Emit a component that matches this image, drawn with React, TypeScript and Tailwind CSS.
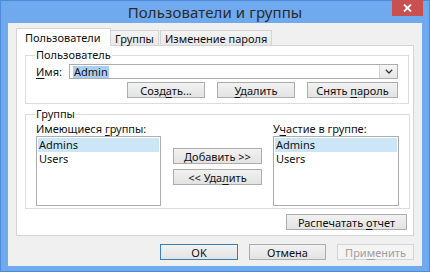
import React from "react";

const font = { fontFamily: '"Noto Sans", "Open Sans", sans-serif' };

function Btn({
  children,
  w,
  primary,
  disabled,
}: {
  children: React.ReactNode;
  w: string;
  primary?: boolean;
  disabled?: boolean;
}) {
  return (
    <div
      className={`${w} h-[16px] flex items-center justify-center text-[11px] leading-none border bg-gradient-to-b ${
        primary
          ? "border-[#3c7fb1] from-[#f2f2f2] to-[#e3e3e3] text-[#111]"
          : disabled
          ? "border-[#d5d5d5] from-[#f4f4f4] to-[#f4f4f4] text-[#a0a0a0]"
          : "border-[#acacac] from-[#f2f2f2] to-[#e3e3e3] text-[#111]"
      }`}
    >
      <span className="whitespace-pre">{children}</span>
    </div>
  );
}

function U({ children }: { children: React.ReactNode }) {
  return <span className="underline underline-offset-[2px]">{children}</span>;
}

function ListBox({ w }: { w: string }) {
  return (
    <div className={`${w} h-[70px] bg-white border border-[#abadb3] p-[1px] text-[11px] leading-[14px] text-[#111]`}>
      <div className="bg-[#cde6f7] pl-[1px]">Admins</div>
      <div className="pl-[1px]">Users</div>
    </div>
  );
}

export default function App() {
  return (
    <div
      style={font}
      className="w-[430px] h-[272px] bg-[#6faaef] border border-[#4c8bd8] flex flex-col"
    >
      {/* title bar */}
      <div className="relative h-[22px] shrink-0 flex items-center justify-center">
        <span className="text-[15px] text-[#2a2a2a] tracking-[0.1px] mt-[1px]">
          Пользователи и группы
        </span>
        <div className="absolute right-[6px] top-[-1px] w-[31px] h-[16px] bg-[#c8504e] flex items-center justify-center">
          <svg width="9" height="8" viewBox="0 0 9 8">
            <path d="M1 0.5 L8 7.5 M8 0.5 L1 7.5" stroke="white" strokeWidth="1.8" />
          </svg>
        </div>
      </div>

      {/* client area */}
      <div className="mx-[7px] mb-[5px] flex-1 bg-[#f0f0f0] pt-[5px] px-[8px] flex flex-col">
        {/* tabs */}
        <div className="flex items-end h-[17px] relative z-10">
          <div className="w-[95px] h-[18px] bg-white border border-b-0 border-[#d4d4d4] text-[11px] leading-none pl-[8px] pt-[3px] text-[#111] -mb-[1px]">
            Пользователи
          </div>
          <div className="w-[48px] h-[15px] bg-gradient-to-b from-[#f4f4f4] to-[#e8e8e8] border border-l-0 border-b-0 border-[#d4d4d4] text-[11px] leading-none pl-[4px] pt-[2px] text-[#111]">
            Группы
          </div>
          <div className="ml-[1px] w-[112px] h-[15px] bg-gradient-to-b from-[#f4f4f4] to-[#e8e8e8] border border-b-0 border-[#d4d4d4] text-[11px] leading-none pl-[4px] pt-[2px] text-[#111]">
            Изменение пароля
          </div>
        </div>

        {/* tab panel */}
        <div className="h-[191px] bg-white border border-[#d4d4d4] pl-[8px] pr-[5px] pt-[2px] flex flex-col text-[#111]">
          <fieldset className="border border-[#dcdcdc] px-[10px] pb-[5px]">
            <legend className="ml-[-1px] px-[1px] text-[11px] leading-[14px]">Пользователь</legend>
            <div className="flex items-center mt-[2px]">
              <span className="w-[33px] text-[11px] leading-none">
                <U>И</U>мя:
              </span>
              <div className="w-[329px] h-[15px] border border-[#abadb3] bg-white flex items-center pl-[3px]">
                <span className="bg-[#a9d0f3] text-[11px] leading-[12px] px-[1px]">Admin</span>
                <div className="ml-auto w-[18px] h-[13px] border-l border-[#d2d2d2] bg-gradient-to-b from-[#f6f6f6] to-[#e6e6e6] flex items-center justify-center">
                  <svg width="8" height="5" viewBox="0 0 8 5">
                    <path d="M0.8 0.8 L4 4 L7.2 0.8" stroke="#333" strokeWidth="1.3" fill="none" />
                  </svg>
                </div>
              </div>
            </div>
            <div className="flex justify-end gap-[12px] mt-[3px]">
              <Btn w="w-[78px]">
                Созд<U>а</U>ть...
              </Btn>
              <Btn w="w-[78px]">
                <U>У</U>далить
              </Btn>
              <Btn w="w-[91px]">
                Снять <U>п</U>ароль
              </Btn>
            </div>
          </fieldset>

          <fieldset className="mt-[3px] border border-[#dcdcdc] px-[10px] pb-[2px]">
            <legend className="ml-[-1px] px-[1px] text-[11px] leading-[14px]">Группы</legend>
            <div className="flex">
              <div className="flex flex-col">
                <span className="text-[11px] leading-[13px] h-[14px] mt-[1px]">
                  Имеющиеся <U>г</U>руппы:
                </span>
                <ListBox w="w-[125px]" />
              </div>
              <div className="flex flex-col gap-[5px] ml-[12px] mt-[27px]">
                <Btn w="w-[89px]">Добавить &gt;&gt;</Btn>
                <Btn w="w-[89px]">
                  &lt;&lt; Уда<U>л</U>ить
                </Btn>
              </div>
              <div className="flex flex-col ml-[11px]">
                <span className="text-[11px] leading-[13px] h-[14px] mt-[1px]">
                  У<U>ч</U>астие в группе:
                </span>
                <ListBox w="w-[126px]" />
              </div>
            </div>
          </fieldset>

          <div className="flex justify-end mt-[5px] pr-[1px]">
            <Btn w="w-[121px]">
              Распечатать <U>о</U>тчет
            </Btn>
          </div>
        </div>

        {/* bottom buttons */}
        <div className="flex justify-end gap-[11px] mt-[8px]">
          <Btn w="w-[78px]" primary>
            OK
          </Btn>
          <Btn w="w-[77px]">Отмена</Btn>
          <Btn w="w-[77px]" disabled>
            При<U>м</U>енить
          </Btn>
        </div>
      </div>
    </div>
  );
}
